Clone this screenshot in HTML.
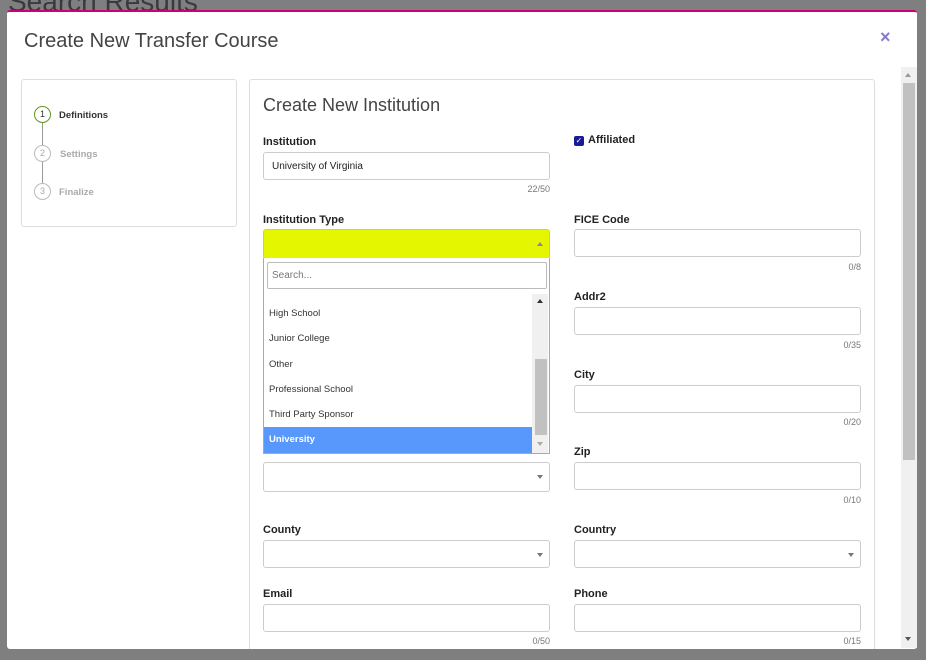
<!DOCTYPE html>
<html><head><style>
*{box-sizing:border-box;margin:0;padding:0}
body{width:926px;height:660px;overflow:hidden;background:#7f7f7f;font-family:"Liberation Sans",sans-serif;position:relative}
.a{position:absolute}
.lbl{position:absolute;font-size:11px;font-weight:bold;color:#222}
.inp{position:absolute;height:28px;border:1px solid #ccc;border-radius:3px;background:#fff}
.cnt{position:absolute;font-size:9px;color:#777;text-align:right;width:100px}
.arr{position:absolute;right:6px;top:12px;width:0;height:0;border-left:3px solid transparent;border-right:3px solid transparent;border-top:4px solid #777}
.it{position:absolute;left:6px;font-size:9.5px;color:#333}
</style></head><body>
<div class="a" style="left:8px;top:-14px;font-size:28px;color:#3a3a3a">Search Results</div>
<div class="a" style="left:7px;top:10px;width:910px;height:639px;background:#fff;border-top:2px solid #cc0077;border-radius:3px;overflow:hidden">
 <div class="a" style="left:242px;top:67px;width:626px;height:600px;border:1px solid #ddd;border-radius:3px"></div>
</div>
<div class="a" style="left:24px;top:30px;font-size:20px;color:#444">Create New Transfer Course</div>
<div class="a" style="left:880px;top:27px;font-size:18px;font-weight:bold;color:#8878cc">×</div>
<div class="a" style="left:21px;top:79px;width:216px;height:148px;border:1px solid #ddd;border-radius:3px"></div>
<div class="a" style="left:34px;top:106px;width:17px;height:17px;border:1.5px solid #5a9a1a;border-radius:50%;font-size:9px;text-align:center;line-height:14px;color:#333">1</div>
<div class="a" style="left:59px;top:110px;font-size:9.5px;font-weight:bold;color:#333">Definitions</div>
<div class="a" style="left:42px;top:123px;width:1px;height:22px;background:#999"></div>
<div class="a" style="left:34px;top:145px;width:17px;height:17px;border:1.5px solid #bbb;border-radius:50%;font-size:9px;text-align:center;line-height:14px;color:#aaa">2</div>
<div class="a" style="left:60px;top:149px;font-size:9.5px;font-weight:bold;color:#aaa">Settings</div>
<div class="a" style="left:42px;top:162px;width:1px;height:21px;background:#999"></div>
<div class="a" style="left:34px;top:183px;width:17px;height:17px;border:1.5px solid #bbb;border-radius:50%;font-size:9px;text-align:center;line-height:14px;color:#aaa">3</div>
<div class="a" style="left:59px;top:187px;font-size:9.5px;font-weight:bold;color:#aaa">Finalize</div>
<div class="a" style="left:263px;top:95px;font-size:18px;color:#444">Create New Institution</div>
<div class="a" style="left:901px;top:67px;width:16px;height:581px;background:#f0f0f0"></div>
<div class="a" style="left:903px;top:83px;width:12px;height:377px;background:#c1c1c1"></div>
<div class="a" style="left:905px;top:73px;border-left:3px solid transparent;border-right:3px solid transparent;border-bottom:4px solid #999"></div>
<div class="a" style="left:905px;top:637px;border-left:3px solid transparent;border-right:3px solid transparent;border-top:4px solid #555"></div>

<div class="lbl" style="left:263px;top:136px">Institution</div>
<div class="inp" style="left:263px;top:152px;width:287px"><span class="a" style="left:8px;top:8px;font-size:10px;color:#222">University of Virginia</span></div>
<div class="cnt" style="left:450px;top:184px">22/50</div>
<div class="lbl" style="left:263px;top:214px">Institution Type</div>
<div class="inp" style="left:263px;top:229px;width:287px;height:30px;background:#e5f700;border-color:#d0e000"><div class="a" style="right:6px;top:12px;border-left:3px solid transparent;border-right:3px solid transparent;border-bottom:4px solid #888"></div></div>
<div class="lbl" style="left:263px;top:445px">State</div>
<div class="inp" style="left:263px;top:462px;width:287px;height:30px"><div class="arr"></div></div>
<div class="lbl" style="left:263px;top:524px">County</div>
<div class="inp" style="left:263px;top:540px;width:287px"><div class="arr"></div></div>
<div class="lbl" style="left:263px;top:588px">Email</div>
<div class="inp" style="left:263px;top:604px;width:287px"></div>
<div class="cnt" style="left:450px;top:636px">0/50</div>

<div class="a" style="left:574px;top:136px;width:10px;height:10px;background:#1a1a99;border-radius:2px;color:#fff;font-size:8px;line-height:10px;text-align:center">✓</div>
<div class="lbl" style="left:588px;top:134px">Affiliated</div>
<div class="lbl" style="left:574px;top:214px">FICE Code</div>
<div class="inp" style="left:574px;top:229px;width:287px"></div>
<div class="cnt" style="left:761px;top:262px">0/8</div>
<div class="lbl" style="left:574px;top:291px">Addr2</div>
<div class="inp" style="left:574px;top:307px;width:287px"></div>
<div class="cnt" style="left:761px;top:340px">0/35</div>
<div class="lbl" style="left:574px;top:369px">City</div>
<div class="inp" style="left:574px;top:385px;width:287px"></div>
<div class="cnt" style="left:761px;top:417px">0/20</div>
<div class="lbl" style="left:574px;top:446px">Zip</div>
<div class="inp" style="left:574px;top:462px;width:287px"></div>
<div class="cnt" style="left:761px;top:495px">0/10</div>
<div class="lbl" style="left:574px;top:524px">Country</div>
<div class="inp" style="left:574px;top:540px;width:287px"><div class="arr"></div></div>
<div class="lbl" style="left:574px;top:588px">Phone</div>
<div class="inp" style="left:574px;top:604px;width:287px"></div>
<div class="cnt" style="left:761px;top:636px">0/15</div>

<div class="a" style="left:263px;top:258px;width:287px;height:196px;background:#fff;border:1px solid #aaa;border-top:none">
 <div class="a" style="left:3px;top:4px;width:280px;height:27px;border:1px solid #bbb;border-radius:2px"><span class="a" style="left:4px;top:7px;font-size:10px;color:#777">Search...</span></div>
 <div class="a" style="left:268px;top:36px;width:16px;height:159px;background:#f0f0f0"></div>
 <div class="a" style="left:271px;top:101px;width:12px;height:76px;background:#c1c1c1"></div>
 <div class="a" style="left:273px;top:41px;border-left:3px solid transparent;border-right:3px solid transparent;border-bottom:4px solid #333"></div>
 <div class="a" style="left:273px;top:184px;border-left:3px solid transparent;border-right:3px solid transparent;border-top:4px solid #aaa"></div>
 <div class="it" style="left:5px;top:50px">High School</div>
 <div class="it" style="left:5px;top:75px">Junior College</div>
 <div class="it" style="left:5px;top:101px">Other</div>
 <div class="it" style="left:5px;top:126px">Professional School</div>
 <div class="it" style="left:5px;top:151px">Third Party Sponsor</div>
 <div class="a" style="left:0;top:169px;width:268px;height:26px;background:#5897fb"><span class="a" style="left:5px;top:7px;font-size:9.5px;color:#fff;font-weight:bold">University</span></div>
</div>
</body></html>
